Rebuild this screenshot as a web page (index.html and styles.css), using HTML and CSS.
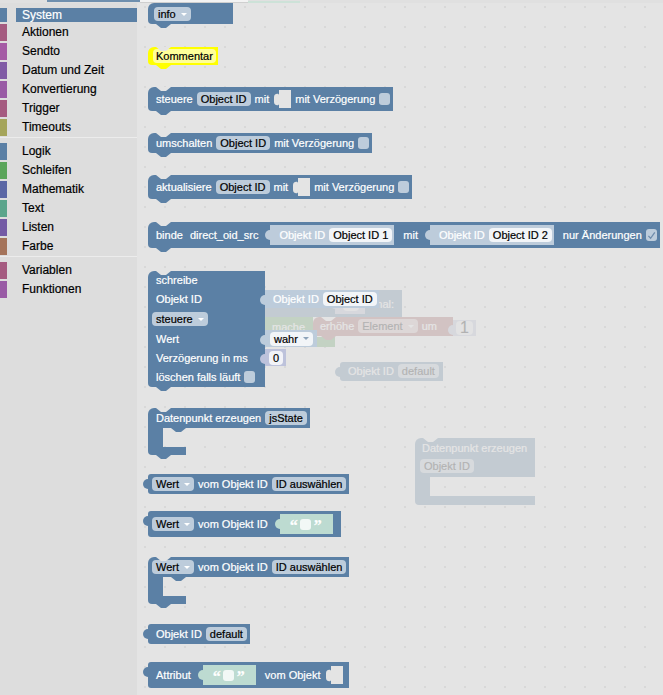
FILE: index.html
```html
<!DOCTYPE html>
<html lang="de">
<head>
<meta charset="utf-8">
<title>Blockly Toolbox</title>
<link rel="stylesheet" href="styles.css">
</head>
<body>
<div class="topedge"><span class="t1"></span><span class="t2"></span><span class="t3"></span></div>
<div class="app">
  <nav class="toolbox">
    <div class="cat sel k-blue"><span class="bar"></span><span class="name">System</span></div>
    <div class="cat k-rose"><span class="bar"></span><span class="name">Aktionen</span></div>
    <div class="cat k-pink"><span class="bar"></span><span class="name">Sendto</span></div>
    <div class="cat k-violet"><span class="bar"></span><span class="name">Datum und Zeit</span></div>
    <div class="cat k-purple"><span class="bar"></span><span class="name">Konvertierung</span></div>
    <div class="cat k-rose"><span class="bar"></span><span class="name">Trigger</span></div>
    <div class="cat k-olive"><span class="bar"></span><span class="name">Timeouts</span></div>
    <div class="sep"></div>
    <div class="cat k-blue"><span class="bar"></span><span class="name">Logik</span></div>
    <div class="cat k-green"><span class="bar"></span><span class="name">Schleifen</span></div>
    <div class="cat k-indigo"><span class="bar"></span><span class="name">Mathematik</span></div>
    <div class="cat k-teal"><span class="bar"></span><span class="name">Text</span></div>
    <div class="cat k-lilac"><span class="bar"></span><span class="name">Listen</span></div>
    <div class="cat k-brown"><span class="bar"></span><span class="name">Farbe</span></div>
    <div class="sep"></div>
    <div class="cat k-rose"><span class="bar"></span><span class="name">Variablen</span></div>
    <div class="cat k-purple"><span class="bar"></span><span class="name">Funktionen</span></div>
  </nav>

  <main class="workspace">
    <div class="ghosts">
      <div class="g-repeat">
        <div class="blk nt gtop">
          <div class="sh num gnum"><span class="f gfld"></span></div>
          <span>mal:</span>
        </div>
        <div class="gmid">
          <div class="garm">mache</div>
          <div class="blk nt tb g-inc"><span>erhöhe</span><span class="f dd">Element</span><span>um</span></div>
          <div class="sh num g-one"><span class="f">1</span></div>
        </div>
        <div class="gfoot"></div>
      </div>

      <div class="blk out g-oid"><span>Objekt ID</span><span class="f">default</span></div>

      <div class="g-dp">
        <div class="gr1 nt">Datenpunkt erzeugen</div>
        <div class="gr2"><span class="f">Objekt ID</span></div>
        <div class="arm"></div>
        <div class="gfoot2"></div>
      </div>
    </div>

    <div class="flyout">
      <div class="blk tb b-info"><span class="f dd">info</span></div>

      <div class="blk nt tb b-komm m23"><span class="f">Kommentar</span></div>

      <div class="blk nt tb m22">
        <span>steuere</span><span class="f">Object ID</span><span>mit</span>
        <svg class="sock" viewBox="0 0 18 18"><path d="M6 0H18V18H6V14C6 16 1 16 1 12V7C1 3 6 3 6 5Z"/></svg>
        <span>mit Verzögerung</span><span class="cb"></span>
      </div>

      <div class="blk nt tb m22">
        <span>umschalten</span><span class="f">Object ID</span><span>mit Verzögerung</span><span class="cb"></span>
      </div>

      <div class="blk nt tb m22">
        <span>aktualisiere</span><span class="f">Object ID</span><span>mit</span>
        <svg class="sock" viewBox="0 0 18 18"><path d="M6 0H18V18H6V14C6 16 1 16 1 12V7C1 3 6 3 6 5Z"/></svg>
        <span>mit Verzögerung</span><span class="cb"></span>
      </div>

      <div class="blk nt tb m23">
        <span>binde</span><span class="l2">direct_oid_src</span>
        <div class="sh"><span>Objekt ID</span><span class="f">Object ID 1</span></div>
        <span>mit</span>
        <div class="sh"><span>Objekt ID</span><span class="f">Object ID 2</span></div>
        <span>nur Änderungen</span>
        <span class="cb"><svg width="9" height="9" viewBox="0 0 9 9"><path d="M1.4 4.9 3.6 7.3 7.8 1.4" fill="none" stroke="#6f8cab" stroke-width="1.3"/></svg></span>
      </div>

      <div class="write nt tb m23">
        <div class="wc first"><span>schreibe</span></div><div class="wa"></div>
        <div class="wc"><span>Objekt ID</span></div>
        <div class="wa"><div class="sh w-oid"><span>Objekt ID</span><span class="f">Object ID</span></div></div>
        <div class="wc pad4"><span class="f dd">steuere</span></div><div class="wa"></div>
        <div class="wc"><span>Wert</span></div>
        <div class="wa"><div class="sh w-bool"><span class="f dd">wahr</span></div></div>
        <div class="wc"><span>Verzögerung in ms</span></div>
        <div class="wa"><div class="sh num w-num"><span class="f">0</span></div></div>
        <div class="wc last"><span>löschen falls läuft</span><span class="cb"></span></div><div class="wa"></div>
      </div>

      <div class="cblk m21">
        <div class="blk nt tb top"><span>Datenpunkt erzeugen</span><span class="f">jsState</span></div>
        <div class="arm"></div>
        <div class="foot tb"></div>
      </div>

      <div class="blk out m19">
        <span class="f dd">Wert</span><span>vom Objekt ID</span><span class="f">ID auswählen</span>
      </div>

      <div class="blk out m17 b-wert2">
        <span class="f dd">Wert</span><span>vom Objekt ID</span>
        <div class="sh txt"><span class="q">“</span><span class="tf"></span><span class="q">”</span></div>
      </div>

      <div class="cblk m20">
        <div class="blk nt tb top b-w3"><span class="f dd">Wert</span><span>vom Objekt ID</span><span class="f">ID auswählen</span></div>
        <div class="arm"></div>
        <div class="foot tb"></div>
      </div>

      <div class="blk out m20 b-oid"><span>Objekt ID</span><span class="f">default</span></div>

      <div class="blk out m18 b-attr">
        <span>Attribut</span>
        <div class="sh txt"><span class="q">“</span><span class="tf"></span><span class="q">”</span></div>
        <span>vom Objekt</span>
        <svg class="sock" viewBox="0 0 18 18"><path d="M6 0H18V18H6V14C6 16 1 16 1 12V7C1 3 6 3 6 5Z"/></svg>
      </div>
    </div>
  </main>
</div>
</body>
</html>
```
FILE: styles.css
```css
* { box-sizing: border-box; }

body {
  margin: 0;
  width: 663px;
  height: 695px;
  overflow: hidden;
  font-family: "Liberation Sans", Arial, sans-serif;
  background: #e4e4e4;
  -webkit-text-stroke: 0.2px currentColor;
}

/* thin leftover edge at the very top */
.topedge { display: flex; height: 3px; background: #e0e0e0; }
.topedge .t1 { margin-left: 47px; width: 93px; height: 2px; background: #6f8fae; }
.topedge .t2 { width: 108px; height: 3px; background: #f3f3f3; border-bottom: 1px solid #cfcfcf; }
.topedge .t3 { width: 52px; height: 2px; margin-top: 1px; background: #cde2d8; }

.app { display: flex; height: 692px; }

/* ---------- toolbox ---------- */
.toolbox {
  width: 137px;
  flex: none;
  background: #ddd;
  padding-top: 5px;
  font-size: 12px;
  color: #000;
}
.cat { display: flex; height: 19px; }
.cat .bar { width: 7px; flex: none; margin: 1px 0; background: var(--cc); }
.cat .name { margin-left: 15px; line-height: 19px; white-space: nowrap; }
.cat.sel { height: 14px; margin-bottom: 1px; }
.cat.sel .bar { margin: 0; }
.cat.sel .name {
  flex: 1;
  margin-left: 9px;
  padding-left: 6px;
  line-height: 14px;
  background: #5b80a5;
  color: #fff;
}
.sep { height: 5px; border-top: 1px solid #ececec; }

.k-blue { --cc: #5b80a5; }
.k-rose { --cc: #a55b80; }
.k-pink { --cc: #a55ba5; }
.k-violet { --cc: #805ba5; }
.k-purple { --cc: #995ba5; }
.k-olive { --cc: #a5a55b; }
.k-green { --cc: #5ba55b; }
.k-indigo { --cc: #5b67a5; }
.k-teal { --cc: #5ba58c; }
.k-lilac { --cc: #745ba5; }
.k-brown { --cc: #a5745b; }

/* ---------- workspace ---------- */
.workspace {
  position: relative;
  flex: 1;
  overflow: hidden;
  background-color: #fff;
  background-image: radial-gradient(circle, #c4c4c4 0.9px, transparent 1.4px);
  background-size: 20px 20px;
  background-position: -2px -6px;
}
.ghosts { position: absolute; inset: 0; --hole: #fff; }
.flyout {
  position: absolute;
  inset: 0;
  background: rgba(221, 221, 221, 0.8);
  padding-left: 11px;
  display: flex;
  flex-direction: column;
  align-items: flex-start;
}

.m17 { margin-top: 17px; }
.m18 { margin-top: 18px; }
.m19 { margin-top: 19px; }
.m20 { margin-top: 20px; }
.m21 { margin-top: 21px; }
.m22 { margin-top: 22px; }
.m23 { margin-top: 23px; }
.m24 { margin-top: 24px; }

/* ---------- blocks ---------- */
.blk {
  --c: #5b80a5;
  position: relative;
  display: flex;
  align-items: center;
  gap: 4px;
  padding: 3px 3px 3px 8px;
  background: var(--c);
  color: #fff;
  font-size: 11px;
  line-height: 14px;
  white-space: nowrap;
  border-radius: 6px 0 0 4px;
}
.nt::before {
  content: "";
  position: absolute;
  top: 0;
  left: 8px;
  width: 15px;
  height: 4px;
  background: var(--hole, #e4e4e4);
  clip-path: polygon(0 0, 15px 0, 10px 4px, 5px 4px);
}
.tb::after {
  content: "";
  position: absolute;
  top: 100%;
  left: 8px;
  width: 15px;
  height: 4px;
  background: var(--c);
  clip-path: polygon(0 0, 15px 0, 10px 4px, 5px 4px);
}
.out { border-radius: 3px 0 0 3px; padding-left: 4px; }
.out::before {
  content: "";
  position: absolute;
  left: -5px;
  top: 5px;
  width: 5px;
  height: 10px;
  background: var(--c);
  border-radius: 5px 0 0 5px;
}

.f {
  display: inline-flex;
  align-items: center;
  height: 14px;
  padding: 0 4px;
  border-radius: 4px;
  background: rgba(255, 255, 255, 0.6);
  color: #000;
}
.dd::after {
  content: "";
  margin-left: 5px;
  border-left: 3px solid transparent;
  border-right: 3px solid transparent;
  border-top: 3px solid #fff;
}
.cb {
  width: 11px;
  height: 12px;
  flex: none;
  border-radius: 3px;
  background: rgba(255, 255, 255, 0.6);
  display: flex;
  align-items: center;
  justify-content: center;
}
.sock { width: 18px; height: 18px; flex: none; display: block; }
.sock path { fill: var(--hole, #e4e4e4); }

.l2 { margin-left: 3px; }

/* attached shadow blocks */
.sh {
  --s: #bdccdb;
  position: relative;
  display: flex;
  align-items: center;
  gap: 4px;
  height: 20px;
  padding: 0 2px 0 9px;
  margin: 0 5px 0 8px;
  background: var(--s);
  color: #fff;
}
.sh::before {
  content: "";
  position: absolute;
  left: -5px;
  top: 5px;
  width: 5px;
  height: 10px;
  background: var(--s);
  border-radius: 5px 0 0 5px;
}
.sh .f { background: rgba(255, 255, 255, 0.8); }
.sh .dd::after { border-top-color: #8ea4ba; }
.sh.num { --s: #bdc2db; }
.sh.txt { --s: #bddbd1; gap: 3px; padding: 0 12px 0 10px; }
.q {
  font-family: "Liberation Serif", "Times New Roman", serif;
  font-weight: bold;
  font-size: 16px;
  line-height: 14px;
  height: 14px;
  width: 7px;
  color: #fff;
  padding-top: 2px;
}
.tf { width: 11px; height: 11px; border-radius: 3px; background: rgba(255, 255, 255, 0.8); }

.b-info { padding: 4px 42px 3px 6px; }
.b-komm { --c: #ffff00; padding: 2px 2px 2px 5px; }
.b-komm .f { padding: 0 3px; }
.b-wert2 { padding-right: 3px; }
.b-w3 { padding-left: 4px; }
.b-oid { padding-left: 8px; }
.b-attr { padding-left: 8px; padding-right: 6px; }

/* schreibe block */
.write {
  --c: #5b80a5;
  position: relative;
  display: grid;
  grid-template-columns: 117px auto;
  grid-template-rows: 18px 20px 20px 19px 19px 20px;
  font-size: 11px;
  line-height: 14px;
  color: #fff;
  white-space: nowrap;
}
.write .wc {
  grid-column: 1;
  display: flex;
  align-items: center;
  gap: 4px;
  padding-left: 8px;
  background: var(--c);
}
.write .wc.first { border-radius: 6px 0 0 0; }
.write .wc.last { border-radius: 0 0 0 4px; }
.write .wc.pad4 { padding-left: 4px; }
.write .wa { grid-column: 2; display: flex; align-items: center; }
.write .sh { margin: 0; height: 18px; }
.write .w-oid { padding: 0 2px 0 8px; }
.write .w-bool { padding: 0 4px 0 5px; height: 17px; }
.write .w-num { padding: 0 3px 0 4px; height: 17px; }

/* C-shaped blocks */
.cblk {
  --c: #5b80a5;
  position: relative;
  display: flex;
  flex-direction: column;
  align-items: flex-start;
}
.cblk .top { border-radius: 6px 0 0 0; }
.cblk .top.tb::after { left: 23px; }
.arm { width: 15px; height: 19px; background: var(--c); }
.foot {
  position: relative;
  width: 38px;
  height: 8px;
  background: var(--c);
  border-radius: 0 0 0 4px;
}

/* ---------- ghost workspace blocks (under the flyout) ---------- */
.g-repeat {
  --c: #5ba55b;
  position: absolute;
  left: 127px;
  top: 287px;
  display: flex;
  flex-direction: column;
  align-items: flex-start;
}
.g-repeat .gtop {
  width: 138px;
  height: 27px;
  justify-content: flex-end;
  padding: 0 8px;
  border-radius: 6px 0 0 0;
}
.g-repeat .gnum { width: 30px; margin: 0 4px 0 0; padding-left: 8px; }
.gfld { width: 16px; }
.gmid { display: flex; align-items: flex-start; }
.garm {
  width: 49px;
  height: 20px;
  padding: 3px 0 0 8px;
  background: var(--c);
  color: #fff;
  font-size: 11px;
  line-height: 14px;
}
.g-inc { --c: #a55b5b; height: 19px; padding: 2px 16px 3px 7px; }
.g-one { margin: 3px 0 0 0; height: 16px; padding: 0 3px; }
.gfoot { width: 71px; height: 10px; background: var(--c); border-radius: 0 0 0 4px; }

.g-oid { position: absolute; left: 203px; top: 359px; height: 19px; padding: 2px 4px 3px 8px; }

.g-dp {
  --c: #5b80a5;
  position: absolute;
  left: 278px;
  top: 435px;
  display: flex;
  flex-direction: column;
  align-items: flex-start;
  color: #fff;
  font-size: 11px;
  line-height: 14px;
  white-space: nowrap;
}
.g-dp .gr1 {
  position: relative;
  width: 120px;
  height: 18px;
  padding: 3px 0 0 7px;
  background: var(--c);
  border-radius: 6px 0 0 0;
}
.g-dp .gr2 { width: 120px; height: 21px; padding: 3px 0 0 5px; background: var(--c); }
.g-dp .gfoot2 { width: 120px; height: 9px; background: var(--c); border-radius: 0 0 0 4px; }
```
